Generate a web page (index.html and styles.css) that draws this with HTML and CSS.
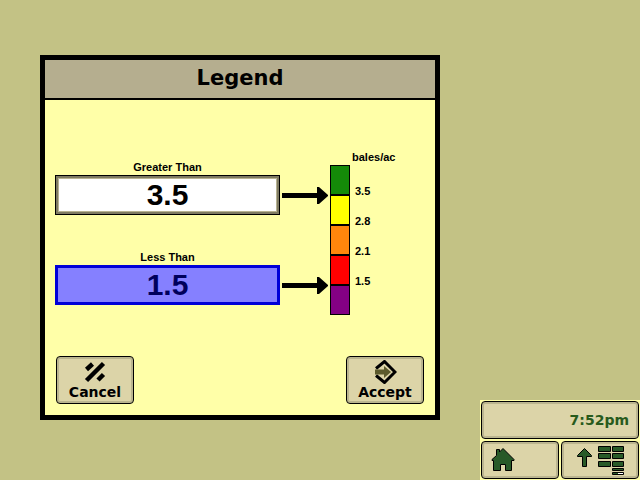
FILE: index.html
```html
<!DOCTYPE html>
<html lang="en">
<head>
  <meta charset="UTF-8">
  <title>Legend</title>
  <link rel="stylesheet" href="styles.css">
</head>
<body>

  <main class="dialog">
    <h1 class="dialog-title">Legend</h1>

    <div class="dialog-body">
      <div class="fields">
        <div class="field">
          <label for="greaterThan">Greater Than</label>
          <input type="text" id="greaterThan" value="3.5">
          <svg class="arrow" viewBox="0 0 50 40">
            <path d="M2 18H37V12H39L48 20V21L39 29H37V23H2Z"/>
          </svg>
        </div>
        <div class="field">
          <label for="lessThan">Less Than</label>
          <input type="text" id="lessThan" class="selected" value="1.5">
          <svg class="arrow" viewBox="0 0 50 40">
            <path d="M2 18H37V12H39L48 20V21L39 29H37V23H2Z"/>
          </svg>
        </div>
      </div>

      <div class="scale">
        <p class="scale-unit">bales/ac</p>
        <ul>
          <li><span class="swatch green"></span>3.5</li>
          <li><span class="swatch yellow"></span>2.8</li>
          <li><span class="swatch orange"></span>2.1</li>
          <li><span class="swatch red"></span>1.5</li>
          <li><span class="swatch purple"></span></li>
        </ul>
      </div>
    </div>

    <div class="dialog-buttons">
      <button type="button" class="btn">
        <svg width="24" height="24" viewBox="0 0 24 24">
          <path d="M3.500 20.500L20.500 3.500M3.500 9.500L9.500 4M15 20L20.500 14.500" stroke="#000" stroke-width="4.500"/>
        </svg>
        Cancel
      </button>
      <button type="button" class="btn">
        <svg width="24" height="24" viewBox="0 0 24 24">
          <path d="M3 8.500L11.500 1.500L22 12L11.500 22.500L3 15.500" fill="none" stroke="#000" stroke-width="3"/>
          <path d="M2 9.500H11V6L18 12L11 18V14.500H2Z" fill="#5c5a2c"/>
        </svg>
        Accept
      </button>
    </div>
  </main>

  <aside class="status">
    <button type="button" class="btn clock">7:52pm</button>
    <button type="button" class="btn home" aria-label="Home">
      <svg width="24" height="24" viewBox="0 0 24 24">
        <path d="M1 11.500L5.500 7.500V1.500H8.500V4L12 0.500L23 11.500V12.500H20.500V22.500H14.500V16.500H9.500V22.500H2.500V12.500H1Z" fill="#285a28" stroke="#000"/>
      </svg>
    </button>
    <button type="button" class="btn menu" aria-label="Menu">
      <svg width="48" height="30" viewBox="0 0 48 30">
        <g fill="#285a28" stroke="#000">
          <path d="M8.500 3.500L15.500 10.500V11.500H10.500V21.500H6.500V11.500H1.500V10.500Z"/>
          <path d="M22.500 1.500H34.500V6.500H22.500ZM36.500 1.500H47.500V6.500H36.500Z"/>
          <path d="M22.500 8.500H34.500V13.500H22.500ZM36.500 8.500H47.500V13.500H36.500Z"/>
          <path d="M22.500 16.500H34.500V21.500H22.500ZM36.500 16.500H47.500V21.500H36.500Z"/>
          <path d="M36.500 23.500H47.500V25.500H36.500ZM36.500 27.500H47.500V29.500H36.500Z"/>
        </g>
        <path d="M42 28.500H47" stroke="#fff"/>
      </svg>
    </button>
  </aside>

</body>
</html>
```
FILE: styles.css
```css
* {
  box-sizing: border-box;
}
body {
  margin: 0;
  min-height: 100vh;
  display: grid;
  grid-template-columns: minmax(0, 1fr) 160px;
  column-gap: 40px;
  align-items: start;
  background-color: #c3c285;
  color: #000;
  font-family: "Liberation Sans", Arial, sans-serif;
  font-size: 11px;
  font-weight: bold;
}

/* Dialog */
.dialog {
  margin: 55px 0 0 40px;
  border: 5px solid #000;
  background-color: #ffffa8;
}
.dialog-title {
  margin: 0;
  padding-bottom: 2px;
  border-bottom: 2px solid #000;
  background-color: #b5ae8f;
  font: bold 21px/36px "DejaVu Sans", Verdana, sans-serif;
  text-align: center;
}
.dialog-body {
  display: flex;
  padding: 50px 0 0 10px;
}

/* Fields */
.fields {
  flex: 1;
  display: flex;
  flex-direction: column;
  gap: 35px;
  padding-top: 10px;
}
.field {
  display: grid;
  grid-template-columns: minmax(0, 1fr) 50px;
}
.field label {
  grid-column: 1 / 3;
  margin-right: 50px;
  line-height: 14px;
  padding-bottom: 1px;
  text-align: center;
}
.field input {
  width: 100%;
  height: 40px;
  padding: 0;
  border: 1px solid #000;
  border-radius: 0;
  background-color: #fff;
  box-shadow: inset 0 0 0 2px #7f7b62, inset 0 0 0 3px #b8b391;
  color: #000;
  font: bold 30px "Liberation Sans", Arial, sans-serif;
  text-align: center;
}
.field input.selected {
  border: 3px solid #0000d8;
  background-color: #8580ff;
  box-shadow: none;
  color: #00005c;
}
.arrow {
  width: 50px;
  height: 40px;
}

/* Colour scale */
.scale {
  width: 105px;
}
.scale-unit {
  margin: 0;
  padding: 0 0 1px 22px;
  line-height: 14px;
}
.scale ul {
  margin: 0;
  padding: 0;
  list-style: none;
}
.scale li {
  display: flex;
  align-items: flex-end;
  gap: 5px;
  line-height: 7px;
}
.swatch {
  width: 20px;
  height: 30px;
  border: 1px solid #000;
}
.green { background-color: #148a08; }
.yellow { background-color: #ffff00; }
.orange { background-color: #ff860c; }
.red { background-color: #ff0000; }
.purple { background-color: #840084; }

/* Buttons */
.btn {
  padding: 0;
  border: 1px solid #000;
  border-radius: 4px;
  background-color: #dcd4a8;
  box-shadow: inset 0 0 0 2px #bbb58f;
  color: #000;
  font: bold 14px/16px "DejaVu Sans", Verdana, sans-serif;
}
.btn svg {
  display: block;
}
.dialog-buttons {
  display: flex;
  justify-content: space-between;
  padding: 41px 11px 11px;
}
.dialog-buttons .btn {
  width: 78px;
  height: 48px;
}
.dialog-buttons svg {
  margin: 0 auto;
}

/* Status area */
.status {
  align-self: end;
  display: grid;
  grid-template-columns: 1fr 1fr;
  gap: 2px;
  padding: 1px;
  background-color: #ffffa8;
}
.status .btn {
  height: 38px;
}
.status .clock {
  grid-column: 1 / 3;
  padding-right: 9px;
  color: #285a1c;
  text-align: right;
}
.status .home {
  padding-left: 9px;
}
.status .menu {
  padding-right: 14px;
}
.menu svg {
  margin-left: auto;
}
```
